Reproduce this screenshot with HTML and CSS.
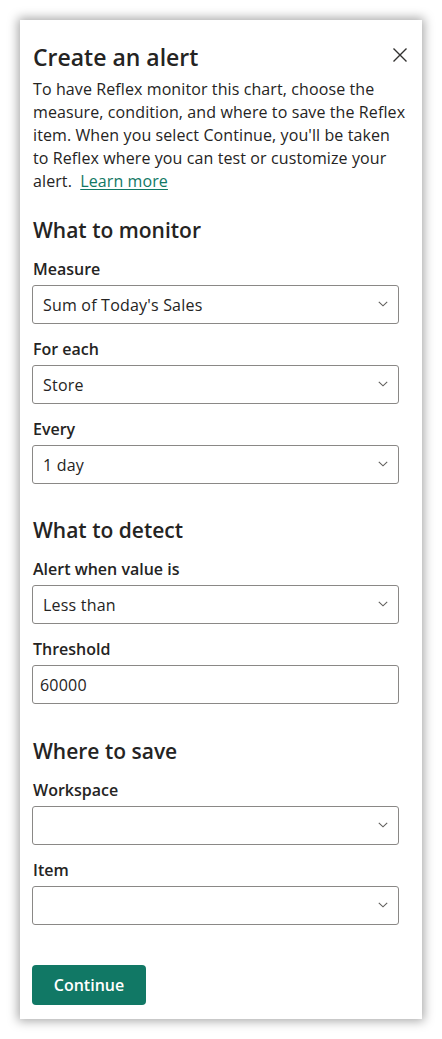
FILE: index.html
```html
<!DOCTYPE html>
<html lang="en">
<head>
<meta charset="utf-8">
<title>Create an alert</title>
<link rel="stylesheet" href="styles.css">
</head>
<body>
<div class="panel">
  <div class="header">
    <h1 class="title">Create an alert</h1>
    <button class="close" aria-label="Close">
      <svg width="16" height="16" viewBox="0 0 16 16"><path d="M1.5 1.5 L14.5 14.5 M14.5 1.5 L1.5 14.5" stroke="#323130" stroke-width="1.4" fill="none"/></svg>
    </button>
  </div>
  <p class="desc">To have Reflex monitor this chart, choose the measure, condition, and where to save the Reflex item. When you select Continue, you'll be taken to Reflex where you can test or customize your alert. <a class="link" href="#">Learn more</a></p>

  <h2 class="section first">What to monitor</h2>
  <div class="field">
    <div class="label">Measure</div>
    <div class="select"><span class="value">Sum of Today's Sales</span><svg class="chev" width="10" height="6" viewBox="0 0 10 6"><path d="M0.8 0.8 L5 4.8 L9.2 0.8" stroke="#605e5c" stroke-width="1.1" fill="none"/></svg></div>
  </div>
  <div class="field">
    <div class="label">For each</div>
    <div class="select"><span class="value">Store</span><svg class="chev" width="10" height="6" viewBox="0 0 10 6"><path d="M0.8 0.8 L5 4.8 L9.2 0.8" stroke="#605e5c" stroke-width="1.1" fill="none"/></svg></div>
  </div>
  <div class="field">
    <div class="label">Every</div>
    <div class="select"><span class="value">1 day</span><svg class="chev" width="10" height="6" viewBox="0 0 10 6"><path d="M0.8 0.8 L5 4.8 L9.2 0.8" stroke="#605e5c" stroke-width="1.1" fill="none"/></svg></div>
  </div>

  <h2 class="section">What to detect</h2>
  <div class="field">
    <div class="label">Alert when value is</div>
    <div class="select"><span class="value">Less than</span><svg class="chev" width="10" height="6" viewBox="0 0 10 6"><path d="M0.8 0.8 L5 4.8 L9.2 0.8" stroke="#605e5c" stroke-width="1.1" fill="none"/></svg></div>
  </div>
  <div class="field">
    <div class="label">Threshold</div>
    <div class="input"><span class="value">60000</span></div>
  </div>

  <h2 class="section save">Where to save</h2>
  <div class="field">
    <div class="label">Workspace</div>
    <div class="select"><span class="value"></span><svg class="chev" width="10" height="6" viewBox="0 0 10 6"><path d="M0.8 0.8 L5 4.8 L9.2 0.8" stroke="#605e5c" stroke-width="1.1" fill="none"/></svg></div>
  </div>
  <div class="field">
    <div class="label">Item</div>
    <div class="select"><span class="value"></span><svg class="chev" width="10" height="6" viewBox="0 0 10 6"><path d="M0.8 0.8 L5 4.8 L9.2 0.8" stroke="#605e5c" stroke-width="1.1" fill="none"/></svg></div>
  </div>

  <div class="actions">
    <button class="primary">Continue</button>
  </div>
</div>
</body>
</html>
```

FILE: styles.css
```css
* { box-sizing: border-box; }
html, body { margin: 0; padding: 0; background: #ffffff; }
body {
  padding: 20px;
  font-family: "Open Sans", "Noto Sans", sans-serif;
  color: #252423;
}
.panel {
  width: 402px;
  height: 999px;
  background: #fff;
  box-shadow: 0 0 10px 2px rgba(0,0,0,0.35);
  padding: 21px 23px 14px 12px;
  display: flex;
  flex-direction: column;
}
.header {
  display: flex;
  justify-content: space-between;
  align-items: flex-start;
  height: 32px;
}
.title {
  margin: 0 0 0 1px;
  font-size: 23px;
  line-height: 32px;
  font-weight: 600;
}
.close {
  background: none;
  border: 0;
  padding: 0;
  margin: 6px -9px 0 0;
  width: 16px;
  height: 16px;
  display: flex;
}
.desc {
  margin: 5px -10px 0 1px;
  font-size: 16px;
  line-height: 23px;
  letter-spacing: 0.1px;
}
.link {
  color: #117865;
  text-decoration: underline;
  text-underline-offset: 2px;
  margin-left: 4px;
}
.section {
  margin: 32px 0 0 1px;
  font-size: 21px;
  line-height: 28px;
  font-weight: 600;
}
.section.first { margin-top: 23px; }
.section.save { margin-top: 33px; }
.field { margin-top: 14px; display: flex; flex-direction: column; }
.label {
  font-size: 16px;
  line-height: 22px;
  font-weight: 600;
  margin-left: 1px;
}
.select, .input {
  margin-top: 5px;
  height: 39px;
  border: 1px solid #8a8886;
  border-radius: 3px;
  display: flex;
  align-items: center;
  justify-content: space-between;
  padding: 0 10px 0 10px;
  font-size: 16px;
  letter-spacing: 0.2px;
}
.input { padding-left: 7px; }
.chev { flex: none; margin-bottom: 2px; }
.actions { margin-top: 40px; }
.primary {
  background: #117865;
  color: #fff;
  border: 0;
  border-radius: 4px;
  width: 114px;
  height: 40px;
  font-family: "Open Sans", "Noto Sans", sans-serif;
  font-size: 16px;
  font-weight: 600;
}
```
